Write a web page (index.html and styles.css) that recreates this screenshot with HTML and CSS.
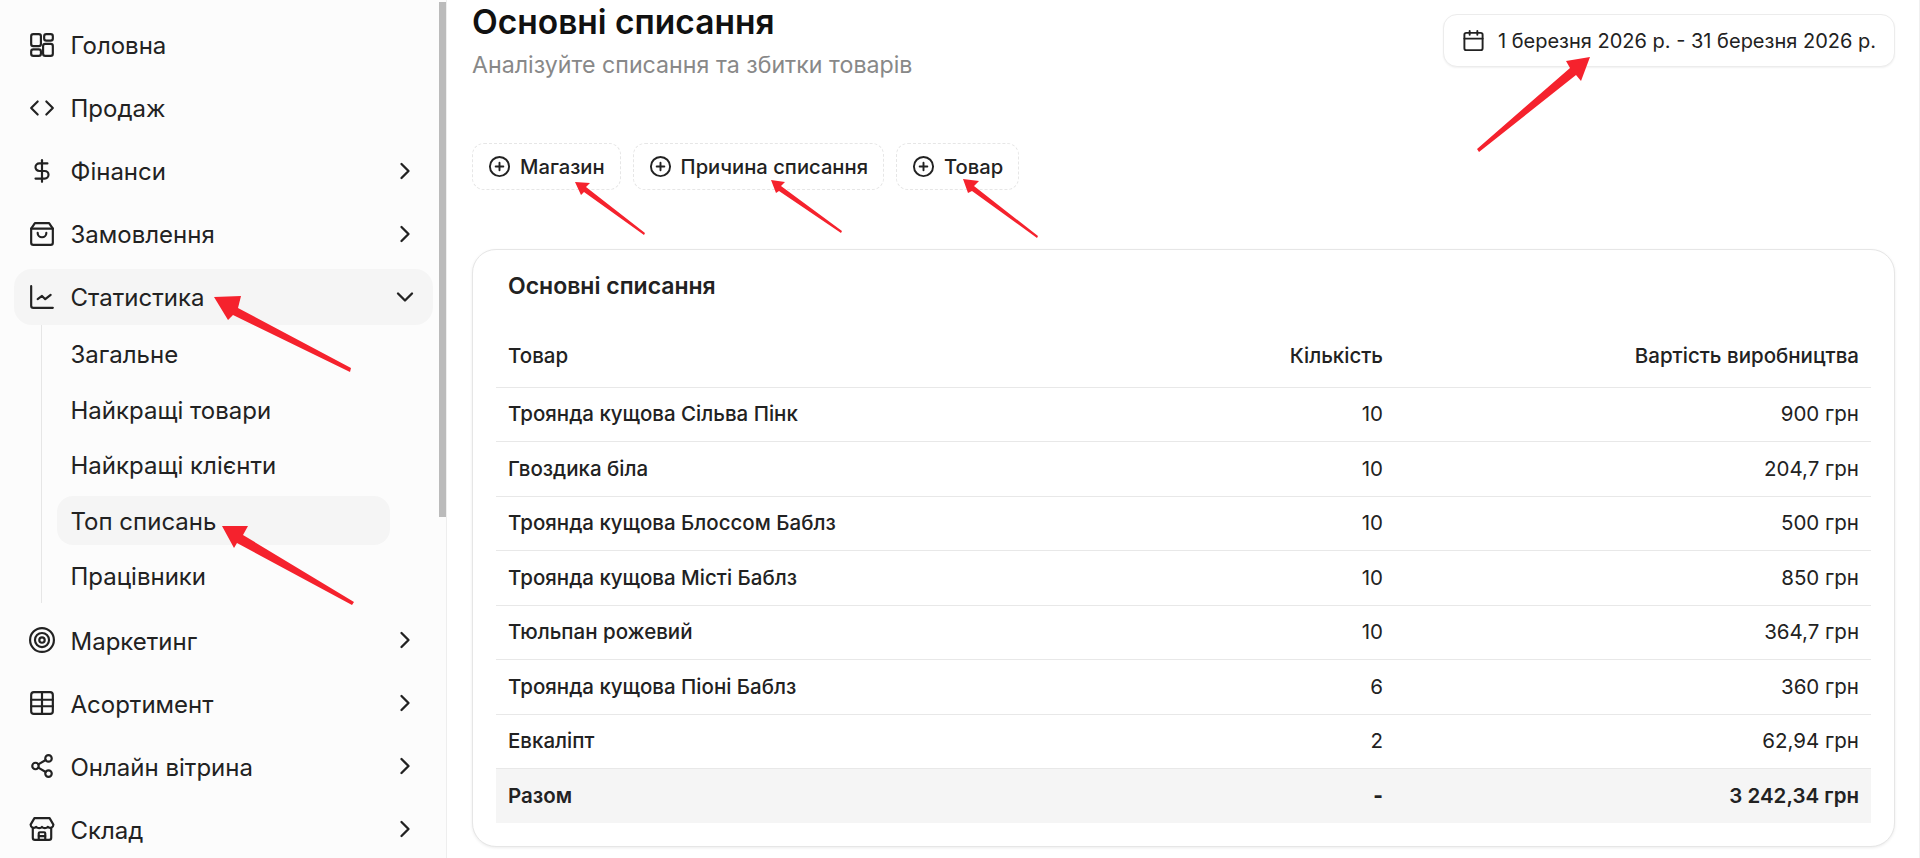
FILE: index.html
```html
<!DOCTYPE html>
<html lang="uk">
<head>
  <meta charset="utf-8">
  <link rel="stylesheet" href="styles.css">
  <title>Основні списання</title>
</head>
<body>
  <aside class="sidebar">
    <nav class="menu">
      <a class="item">
        <svg class="ico" viewBox="0 0 24 24"><rect x="2" y="2" width="9" height="11" rx="2"/><rect x="14" y="2" width="8" height="6" rx="2"/><rect x="13" y="11" width="9" height="11" rx="2"/><rect x="2" y="16" width="9" height="6" rx="2"/></svg>
        <span>Головна</span>
      </a>
      <a class="item">
        <svg class="ico" viewBox="0 0 24 24"><path d="m16 18 6-6-6-6"/><path d="m8 6-6 6 6 6"/></svg>
        <span>Продаж</span>
      </a>
      <a class="item">
        <svg class="ico" viewBox="0 0 24 24"><path d="M12 2v20"/><path d="M17 5H9.500a3.500 3.500 0 0 0 0 7h5a3.500 3.500 0 0 1 0 7H6"/></svg>
        <span>Фінанси</span>
        <svg class="chev" viewBox="0 0 24 24"><path d="m9 6 6 6-6 6"/></svg>
      </a>
      <a class="item">
        <svg class="ico" viewBox="0 0 24 24"><path d="M6 2h12a1 1 0 0 1 1 .6L22 7v13a2 2 0 0 1-2 2H4a2 2 0 0 1-2-2V7l3-4.400A1 1 0 0 1 6 2z"/><path d="M2 7h20"/><path d="M16 11a4 4 0 0 1-8 0"/></svg>
        <span>Замовлення</span>
        <svg class="chev" viewBox="0 0 24 24"><path d="m9 6 6 6-6 6"/></svg>
      </a>
      <a class="item active">
        <svg class="ico" viewBox="0 0 24 24"><path d="M2 2v18a2 2 0 0 0 2 2h18"/><path d="m20 10-5 4-3-3-4 3"/></svg>
        <span>Статистика</span>
        <svg class="chev" viewBox="0 0 24 24"><path d="m6 9 6 6 6-6"/></svg>
      </a>
      <div class="submenu">
        <a class="subitem">Загальне</a>
        <a class="subitem">Найкращі товари</a>
        <a class="subitem">Найкращі клієнти</a>
        <a class="subitem active">Топ списань</a>
        <a class="subitem">Працівники</a>
      </div>
      <a class="item">
        <svg class="ico" viewBox="0 0 24 24"><circle cx="12" cy="12" r="11"/><circle cx="12" cy="12" r="6.500"/><circle cx="12" cy="12" r="2.500"/></svg>
        <span>Маркетинг</span>
        <svg class="chev" viewBox="0 0 24 24"><path d="m9 6 6 6-6 6"/></svg>
      </a>
      <a class="item">
        <svg class="ico" viewBox="0 0 24 24"><rect x="2" y="2" width="20" height="20" rx="2.500"/><path d="M2 9h20M2 15h20M12 2v20"/></svg>
        <span>Асортимент</span>
        <svg class="chev" viewBox="0 0 24 24"><path d="m9 6 6 6-6 6"/></svg>
      </a>
      <a class="item">
        <svg class="ico" viewBox="0 0 24 24"><circle cx="18" cy="5" r="3"/><circle cx="6" cy="12" r="3"/><circle cx="18" cy="19" r="3"/><path d="m8.600 13.500 6.800 4M15.400 6.500l-6.800 4"/></svg>
        <span>Онлайн вітрина</span>
        <svg class="chev" viewBox="0 0 24 24"><path d="m9 6 6 6-6 6"/></svg>
      </a>
      <a class="item">
        <svg class="ico" viewBox="0 0 24 24"><path d="M5 2h14l3.500 6a3 3 0 0 1-5.200 2 3.500 3.500 0 0 1-5.300 0 3.500 3.500 0 0 1-5.300 0A3 3 0 0 1 1.500 8z"/><path d="M3.500 11v9a2 2 0 0 0 2 2h13a2 2 0 0 0 2-2v-9"/><path d="M9 22v-6a1 1 0 0 1 1-1h4a1 1 0 0 1 1 1v6"/><path d="M9 18.500h6"/></svg>
        <span>Склад</span>
        <svg class="chev" viewBox="0 0 24 24"><path d="m9 6 6 6-6 6"/></svg>
      </a>
    </nav>
    <div class="thumb"></div>
  </aside>

  <main class="content">
    <header class="head">
      <div>
        <h1>Основні списання</h1>
        <p class="sub">Аналізуйте списання та збитки товарів</p>
      </div>
      <button class="date">
        <svg class="cal" viewBox="0 0 24 24"><rect x="2.500" y="4" width="19" height="18" rx="2"/><path d="M2.500 10h19M8 2v4M16 2v4"/></svg>
        1 березня 2026 р. - 31 березня 2026 р.
      </button>
    </header>

    <div class="filters">
      <button class="filter"><svg class="plus" viewBox="0 0 24 24"><circle cx="12" cy="12" r="10"/><path d="M8 12h8M12 8v8"/></svg>Магазин</button>
      <button class="filter"><svg class="plus" viewBox="0 0 24 24"><circle cx="12" cy="12" r="10"/><path d="M8 12h8M12 8v8"/></svg>Причина списання</button>
      <button class="filter"><svg class="plus" viewBox="0 0 24 24"><circle cx="12" cy="12" r="10"/><path d="M8 12h8M12 8v8"/></svg>Товар</button>
    </div>

    <section class="card">
      <h2>Основні списання</h2>
      <table>
        <colgroup><col class="c1"><col class="c2"><col class="c3"></colgroup>
        <thead>
          <tr><th>Товар</th><th class="num">Кількість</th><th class="num">Вартість виробництва</th></tr>
        </thead>
        <tbody>
          <tr><td>Троянда кущова Сільва Пінк</td><td class="num">10</td><td class="num">900 грн</td></tr>
          <tr><td>Гвоздика біла</td><td class="num">10</td><td class="num">204,7 грн</td></tr>
          <tr><td>Троянда кущова Блоссом Баблз</td><td class="num">10</td><td class="num">500 грн</td></tr>
          <tr><td>Троянда кущова Місті Баблз</td><td class="num">10</td><td class="num">850 грн</td></tr>
          <tr><td>Тюльпан рожевий</td><td class="num">10</td><td class="num">364,7 грн</td></tr>
          <tr><td>Троянда кущова Піоні Баблз</td><td class="num">6</td><td class="num">360 грн</td></tr>
          <tr><td>Евкаліпт</td><td class="num">2</td><td class="num">62,94 грн</td></tr>
          <tr class="total"><td>Разом</td><td class="num dash">-</td><td class="num">3 242,34 грн</td></tr>
        </tbody>
      </table>
    </section>
  </main>

  <!-- red annotation arrows drawn over the screenshot -->
  <svg class="arrows" viewBox="0 0 1920 858">
    <path d="M214 297 241 296 238 308 351 368 350 372 233 315 228 320z"/>
    <path d="M222 526 248 526 243 535 354 602 352 605 237 543 234 548z"/>
    <path d="M575 182 590 183 586 187 645 233 644 235 584 192 581 195z"/>
    <path d="M771 180 785 182 781 186 842 231 841 233 779 191 776 193z"/>
    <path d="M963 179 979 181 974 186 1038 236 1037 238 972 191 968 193z"/>
    <path d="M1590 57 1581 81 1576 75 1479 152 1477 149 1570 68 1566 61z"/>
  </svg>
</body>
</html>
```

FILE: styles.css
```css
:root {
  --ink: #222;
  --line: #e8e8e8;
  --soft: #f5f5f5;
}

html, body {
  height: 100%;
}

body {
  margin: 0;
  display: flex;
  overflow: hidden;
  background: #fff;
  color: var(--ink);
  font-family: Inter, "Noto Sans", sans-serif;
}

/* sidebar */
.sidebar {
  position: relative;
  flex: 0 0 447px;
  height: 858px;
  box-sizing: border-box;
  background: #fcfcfc;
  border-right: 1px solid #eee;
  overflow: hidden;
}

.menu {
  display: flex;
  flex-direction: column;
  gap: 7px;
  padding: 16.500px 14px 0;
  width: 419px;
}

.item {
  display: flex;
  align-items: center;
  flex: 0 0 56px;
  padding: 0 15px;
  box-sizing: border-box;
  border-radius: 18px;
  font-size: 24px;
}
.item.active {
  background: var(--soft);
}
.item span {
  flex: 1;
  margin-left: 15.500px;
  padding-top: 2px;
}

.ico {
  width: 26px;
  height: 26px;
  flex: none;
  fill: none;
  stroke: var(--ink);
  stroke-width: 2;
  stroke-linecap: round;
  stroke-linejoin: round;
}

.chev {
  width: 28px;
  height: 28px;
  flex: none;
  margin-right: -1px;
  fill: none;
  stroke: var(--ink);
  stroke-width: 2;
  stroke-linecap: round;
  stroke-linejoin: round;
}

.submenu {
  display: flex;
  flex-direction: column;
  gap: 6.500px;
  margin: -7px 0 2px 27px;
  padding: 5px 43px 2.500px 15px;
  border-left: 1px solid #e6e6e6;
}

.subitem {
  display: flex;
  align-items: center;
  height: 49px;
  padding: 1px 0 0 13.500px;
  box-sizing: border-box;
  border-radius: 16px;
  font-size: 24px;
}
.subitem.active {
  background: var(--soft);
}

.thumb {
  position: absolute;
  top: 2px;
  right: 0;
  width: 7px;
  height: 515px;
  background: #bbb;
}

/* main column */
.content {
  flex: 1;
  padding: 0 24px 0 25px;
  min-width: 0;
  border-right: 1px solid #f0f0f0;
}

.head {
  display: flex;
  justify-content: space-between;
  align-items: flex-start;
}

h1 {
  margin: 2px 0 0;
  font-size: 33.500px;
  line-height: 40px;
  font-weight: 600;
  color: #111;
}

.sub {
  margin: 9px 0 0;
  font-size: 23.200px;
  line-height: 28px;
  color: #888;
}

.date {
  display: flex;
  align-items: center;
  gap: 13px;
  height: 53px;
  margin-top: 14px;
  padding: 0 18px 0 18px;
  background: #fff;
  border: 1px solid #ececec;
  border-radius: 14px;
  box-shadow: 0 1px 2px #0000000f;
  font: inherit;
  font-size: 20px;
  color: var(--ink);
}

.cal {
  width: 23px;
  height: 23px;
  fill: none;
  stroke: var(--ink);
  stroke-width: 2;
  stroke-linecap: round;
  stroke-linejoin: round;
}

.filters {
  display: flex;
  gap: 12px;
  margin-top: 64px;
}

.filter {
  display: flex;
  align-items: center;
  gap: 9px;
  height: 47px;
  padding: 0 15px 0 15px;
  background: #fff;
  border: 1px dashed #e6e6e6;
  border-radius: 12px;
  font: inherit;
  font-size: 20.200px;
  font-weight: 500;
  color: var(--ink);
}

.plus {
  width: 23px;
  height: 23px;
  fill: none;
  stroke: var(--ink);
  stroke-width: 2;
  stroke-linecap: round;
}

/* table card */
.card {
  margin-top: 59px;
  height: 598px;
  box-sizing: border-box;
  padding: 23px 23px 0;
  background: #fff;
  border: 1px solid #e6e6e6;
  border-radius: 24px;
  box-shadow: 0 1px 3px #00000014;
}

h2 {
  margin: 0 0 0 12px;
  font-size: 23px;
  line-height: 26px;
  font-weight: 600;
}

table {
  width: 100%;
  margin-top: 27px;
  border-collapse: collapse;
  table-layout: fixed;
  font-size: 20.500px;
}

.c1 { width: 752px; }
.c2 { width: 147px; }

th, td {
  height: 54.500px;
  padding: 0 12px 1px;
  box-sizing: border-box;
  text-align: left;
  font-weight: 500;
}

th {
  height: 61px;
  border-bottom: 1px solid var(--line);
}

td {
  border-bottom: 1px solid var(--line);
  color: #222;
}

th.num, td.num {
  text-align: right;
  font-weight: 400;
}
th.num { font-weight: 500; }

tr.total td {
  background: var(--soft);
  border-bottom: 0;
  font-weight: 600;
}
tr.total td.dash {
  font-weight: 800;
}

/* annotations */
.arrows {
  position: absolute;
  top: 0;
  left: 0;
  width: 1920px;
  height: 858px;
  pointer-events: none;
}
.arrows path {
  fill: #f5222d;
}
```
